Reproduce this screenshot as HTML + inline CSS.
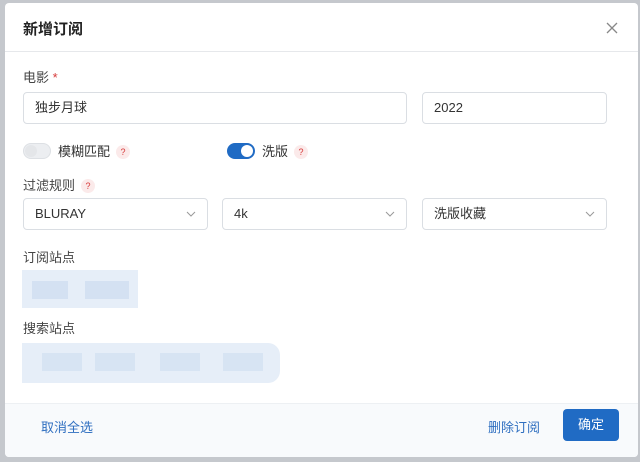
<!DOCTYPE html>
<html><head><meta charset="utf-8"><style>
*{box-sizing:border-box;margin:0;padding:0}
body{width:640px;height:462px;background:#c5c8cd;font-family:"Liberation Sans","Noto Sans CJK SC",sans-serif;position:relative;overflow:hidden;color:#333}
.m{position:absolute;left:5px;top:3px;width:633px;height:454px;background:#fff;border-radius:4px;overflow:hidden}
.hd{position:absolute;left:0;top:0;right:0;height:49px;border-bottom:1px solid #e6e8eb}
.hd .t{position:absolute;left:18px;top:15px;font-size:15px;font-weight:bold;color:#222}
.x{position:absolute;left:601px;top:19px}
.lbl{position:absolute;font-size:13px;color:#444}
.req{color:#d63939}
.q{display:inline-block;width:14px;height:14px;border-radius:50%;background:#fbeaea;color:#d63939;font-size:9px;text-align:center;line-height:14px;vertical-align:1px;margin-left:6px}
.in{position:absolute;border:1px solid #dadee3;border-radius:4px;height:32px;font-size:13px;color:#333;padding-left:11px;line-height:30px}
.chev{position:absolute;right:11px;top:11px}
.sw{position:absolute;width:28px;height:16px;border-radius:8px}
.sw i{position:absolute;top:2px;width:12px;height:12px;border-radius:50%;background:#fff}
.blur{position:absolute;background:#e6eef8}
.b{position:absolute;background:#c8d9ee}
.ft{position:absolute;left:0;right:0;top:400px;bottom:0;background:#f8fafc;border-top:1px solid #edf0f3}
.lk{position:absolute;color:#2f6fc0;font-size:13px}
.btn{position:absolute;left:558px;top:406px;width:56px;height:32px;background:#206bc4;color:#fff;border-radius:4px;font-size:13px;text-align:center;line-height:32px}
</style></head><body>
<div class="m">
<div class="hd"><div class="t">新增订阅</div>
<svg class="x" width="12" height="12" viewBox="0 0 12 12"><path d="M1 1L11 11M11 1L1 11" stroke="#888" stroke-width="1.3"/></svg></div>
<div class="lbl" style="left:18px;top:64px">电影 <span class="req">*</span></div>
<div class="in" style="left:18px;top:89px;width:384px">独步月球</div>
<div class="in" style="left:417px;top:89px;width:185px">2022</div>
<div class="sw" style="left:18px;top:140px;background:#eceef1;border:1px solid #dde0e4"><i style="left:1px;top:1px;background:#e4e6e9"></i></div>
<div class="lbl" style="left:53px;top:138px;color:#333">模糊匹配<span class="q">?</span></div>
<div class="sw" style="left:222px;top:140px;background:#206bc4"><i style="left:14px"></i></div>
<div class="lbl" style="left:257px;top:138px;color:#333">洗版<span class="q">?</span></div>
<div class="lbl" style="left:18px;top:172px">过滤规则<span class="q">?</span></div>
<div class="in" style="left:18px;top:195px;width:185px">BLURAY<svg class="chev" width="10" height="8"><path d="M1 2L5 6L9 2" stroke="#999" fill="none"/></svg></div>
<div class="in" style="left:217px;top:195px;width:185px">4k<svg class="chev" width="10" height="8"><path d="M1 2L5 6L9 2" stroke="#999" fill="none"/></svg></div>
<div class="in" style="left:417px;top:195px;width:185px">洗版收藏<svg class="chev" width="10" height="8"><path d="M1 2L5 6L9 2" stroke="#999" fill="none"/></svg></div>
<div class="lbl" style="left:18px;top:244px">订阅站点</div>
<div class="blur" style="left:17px;top:267px;width:116px;height:38px"></div>
<div class="b" style="left:27px;top:278px;width:36px;height:18px;opacity:.6"></div>
<div class="b" style="left:80px;top:278px;width:44px;height:18px;opacity:.6"></div>
<div class="lbl" style="left:18px;top:315px">搜索站点</div>
<div class="blur" style="left:17px;top:340px;width:258px;height:40px;border-radius:0 12px 12px 0"></div>
<div class="b" style="left:37px;top:350px;width:40px;height:18px;opacity:.5"></div>
<div class="b" style="left:90px;top:350px;width:40px;height:18px;opacity:.5"></div>
<div class="b" style="left:155px;top:350px;width:40px;height:18px;opacity:.5"></div>
<div class="b" style="left:218px;top:350px;width:40px;height:18px;opacity:.5"></div>
<div class="ft"></div>
<div class="lk" style="left:36px;top:414px">取消全选</div>
<div class="lk" style="left:483px;top:414px">删除订阅</div>
<div class="btn">确定</div>
</div>
</body></html>
